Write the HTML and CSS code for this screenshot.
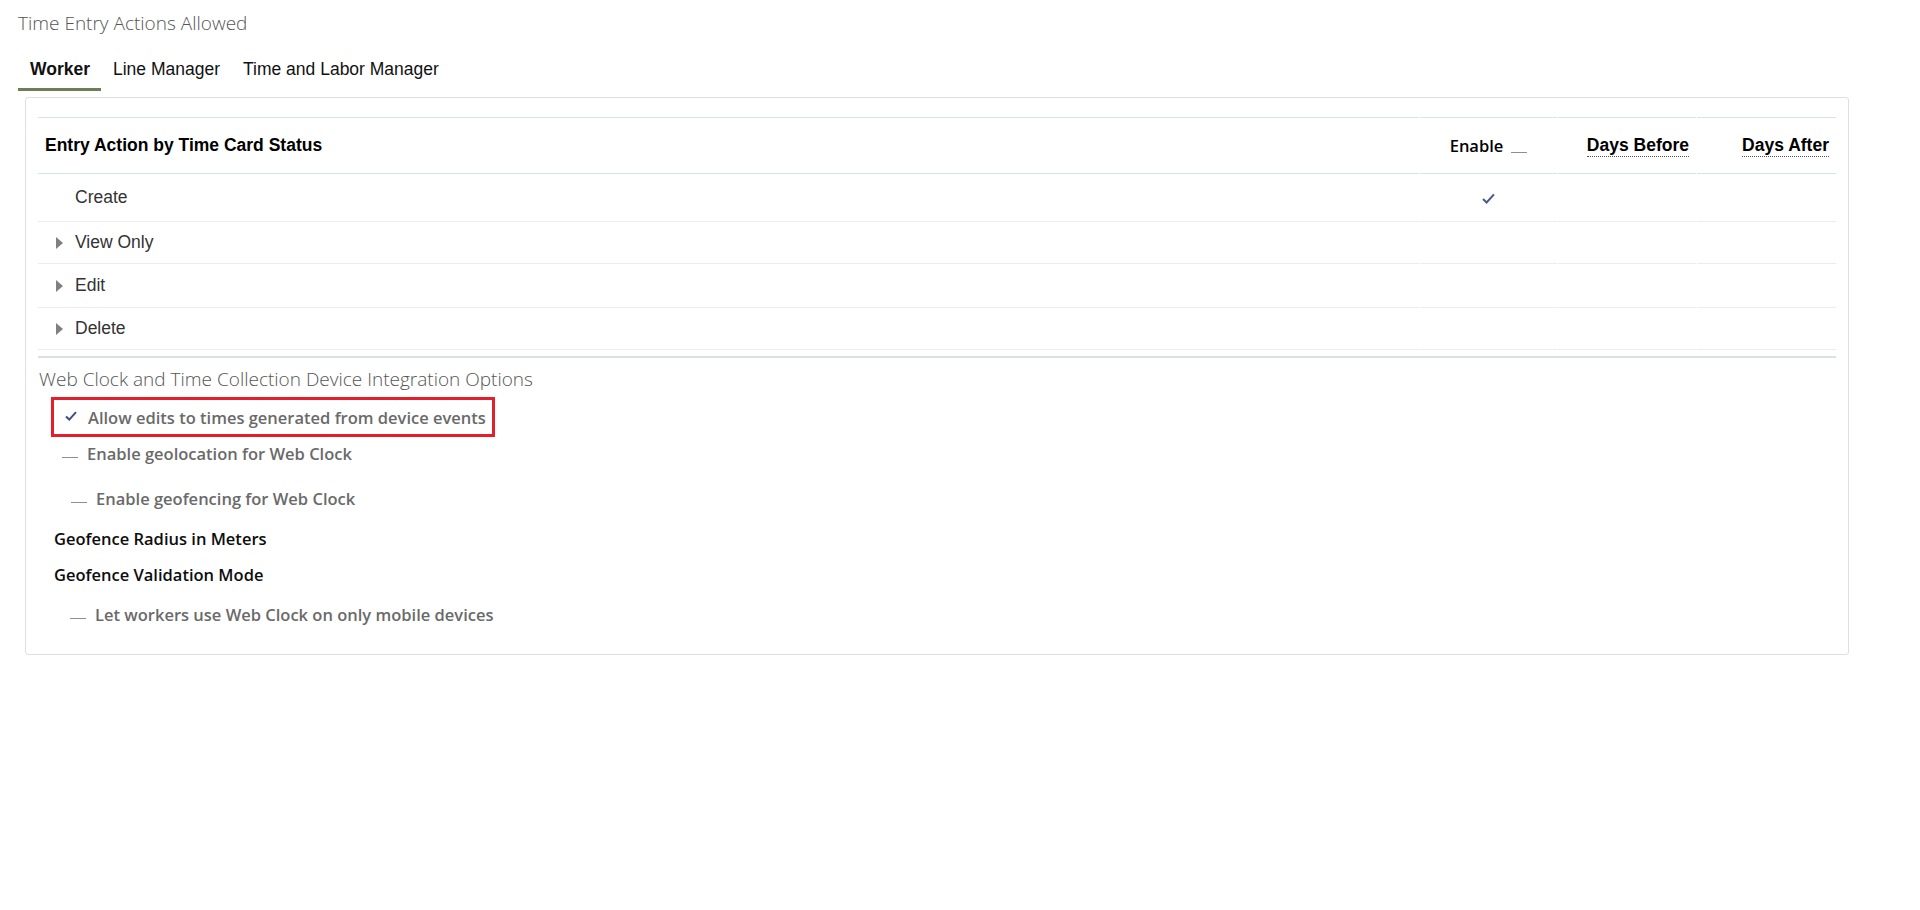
FILE: index.html
```html
<!DOCTYPE html>
<html lang="en">
<head>
<meta charset="utf-8">
<title>Time Entry Actions Allowed</title>
<link rel="stylesheet" href="styles.css">
</head>
<body>
<div class="page">
  <h1 class="title">Time Entry Actions Allowed</h1>
  <div class="tabs">
    <div class="tab active">Worker</div>
    <div class="tab">Line Manager</div>
    <div class="tab">Time and Labor Manager</div>
  </div>
  <div class="panel">
    <table class="grid">
      <colgroup>
        <col class="c-name"><col class="c-enable"><col class="c-before"><col class="c-after">
      </colgroup>
      <thead>
        <tr class="head">
          <th class="h-name">Entry Action by Time Card Status</th>
          <th class="h-enable"><span class="enable-lbl">Enable</span><span class="dash"></span></th>
          <th class="h-num"><span class="dotted">Days Before</span></th>
          <th class="h-num"><span class="dotted">Days After</span></th>
        </tr>
      </thead>
      <tbody>
        <tr class="r-create">
          <td class="name"><span class="twisty none"></span>Create</td>
          <td class="enable"><svg class="check" viewBox="0 0 13 11" width="13" height="11"><path d="M1 6 L4.6 9.4 L12 1.4" fill="none" stroke="#4d5b8c" stroke-width="2.1"/></svg></td>
          <td></td><td></td>
        </tr>
        <tr class="r-view">
          <td class="name"><span class="twisty"></span>View Only</td>
          <td></td><td></td><td></td>
        </tr>
        <tr class="r-edit">
          <td class="name"><span class="twisty"></span>Edit</td>
          <td></td><td></td><td></td>
        </tr>
        <tr class="r-delete">
          <td class="name"><span class="twisty"></span>Delete</td>
          <td></td><td></td><td></td>
        </tr>
      </tbody>
    </table>
    <div class="section">
      <h2 class="sec-title">Web Clock and Time Collection Device Integration Options</h2>
      <div class="opt highlight">
        <svg class="check small" viewBox="0 0 12 10" width="12" height="10"><path d="M1 5.5 L4.3 8.6 L11 1.2" fill="none" stroke="#3f4d80" stroke-width="2"/></svg>
        <span class="opt-text">Allow edits to times generated from device events</span>
      </div>
      <div class="opt geoloc">
        <span class="dash"></span>
        <span class="opt-text">Enable geolocation for Web Clock</span>
      </div>
      <div class="opt geofence">
        <span class="dash"></span>
        <span class="opt-text">Enable geofencing for Web Clock</span>
      </div>
      <div class="label radius">Geofence Radius in Meters</div>
      <div class="label validation">Geofence Validation Mode</div>
      <div class="opt mobile">
        <span class="dash"></span>
        <span class="opt-text">Let workers use Web Clock on only mobile devices</span>
      </div>
    </div>
  </div>
</div>
</body>
</html>
```

FILE: styles.css
```css
html, body {
  margin: 0;
  padding: 0;
  background: #ffffff;
}

body {
  font-family: "Liberation Sans", Arial, sans-serif;
  color: #000;
}

.page {
  width: 1920px;
}

.title {
  margin: 0;
  height: 46px;
  line-height: 46px;
  padding-left: 18px;
  font-family: "Open Sans", "Noto Sans", sans-serif;
  font-weight: 300;
  font-size: 19px;
  color: #555;
}

.tabs {
  display: flex;
  padding-left: 18px;
}

.tab {
  padding: 4px 11px 0 12px;
  line-height: 38px;
  font-size: 17.5px;
  color: #111;
  border-bottom: 3px solid transparent;
}

.tab.active {
  font-weight: bold;
  border-bottom-color: #6a7f55;
}

.panel {
  box-sizing: border-box;
  margin: 6px 0 0 25px;
  width: 1824px;
  border: 1px solid #d9e0e6;
  border-radius: 3px;
  padding: 19px 12px 24px 12px;
}

.grid {
  border-collapse: separate;
  border-spacing: 1px 0;
  table-layout: fixed;
  margin: 0 -1px;
  width: calc(100% + 2px);
}

.c-name { width: 1381px; }
.c-enable { width: 137px; }
.c-before { width: 138px; }
.c-after { width: 139px; }

.grid th, .grid td {
  padding: 0;
}

.head th {
  height: 55px;
  border-top: 1px solid #d9e0e6;
  border-bottom: 1px solid #d9e0e6;
  font-size: 17.5px;
  font-weight: bold;
  color: #000;
  vertical-align: middle;
}

.h-name {
  text-align: left;
  padding-left: 7px !important;
}

.h-enable {
  text-align: center;
  white-space: nowrap;
}

.enable-lbl {
  font-family: "Open Sans", "Noto Sans", sans-serif;
  font-weight: 600;
  font-size: 16.5px;
  vertical-align: middle;
}

.h-enable .dash {
  margin-left: 8px;
  vertical-align: -3px;
}

.h-num {
  text-align: right;
  padding-right: 7px !important;
}

.dotted {
  border-bottom: 1px dotted #555;
  padding-bottom: 1px;
}

.grid td {
  border-bottom: 1px solid #ececec;
  font-size: 17.5px;
  color: #333;
  vertical-align: middle;
}

.r-create td { height: 47px; }
.r-view td { height: 41px; }
.r-edit td { height: 43px; }
.r-delete td { height: 41px; }

.name {
  padding-left: 18px !important;
  white-space: nowrap;
}

.twisty {
  display: inline-block;
  width: 0;
  height: 0;
  border-top: 6px solid transparent;
  border-bottom: 6px solid transparent;
  border-left: 7px solid #808080;
  margin-right: 12px;
  vertical-align: -1px;
}

.twisty.none {
  border-left-color: transparent;
}

.enable {
  text-align: center;
}

.check {
  display: inline-block;
  vertical-align: middle;
}

.dash {
  display: inline-block;
  width: 16px;
  height: 1px;
  background: #8e8e8e;
}

.section {
  margin-top: 6px;
  border-top: 2px solid #d9e0e6;
}

.sec-title {
  margin: 4px 0 0 1px;
  height: 35px;
  line-height: 35px;
  font-family: "Open Sans", "Noto Sans", sans-serif;
  font-weight: 300;
  font-size: 19px;
  color: #555;
}

.opt {
  display: flex;
  align-items: center;
  font-family: "Open Sans", "Noto Sans", sans-serif;
  font-weight: 600;
  font-size: 16.5px;
  color: #6a6a6a;
}

.opt .dash {
  margin-top: 9px;
  margin-right: 9px;
}

.highlight {
  box-sizing: border-box;
  width: 444px;
  height: 40px;
  margin-left: 13px;
  border: 3px solid #e41f2b;
  padding-left: 11px;
}

.highlight .check {
  margin-right: 11px;
  margin-top: -3px;
}

.geoloc {
  height: 32px;
  padding-left: 24px;
}

.geofence {
  margin-top: 12px;
  height: 34px;
  padding-left: 33px;
}

.mobile {
  margin-top: 9px;
  height: 32px;
  padding-left: 32px;
}

.label {
  margin-left: 16px;
  height: 28px;
  line-height: 28px;
  font-family: "Open Sans", "Noto Sans", sans-serif;
  font-weight: 600;
  font-size: 16.5px;
  color: #0d0d0d;
}

.radius { margin-top: 10px; }
.validation { margin-top: 8px; }
```
